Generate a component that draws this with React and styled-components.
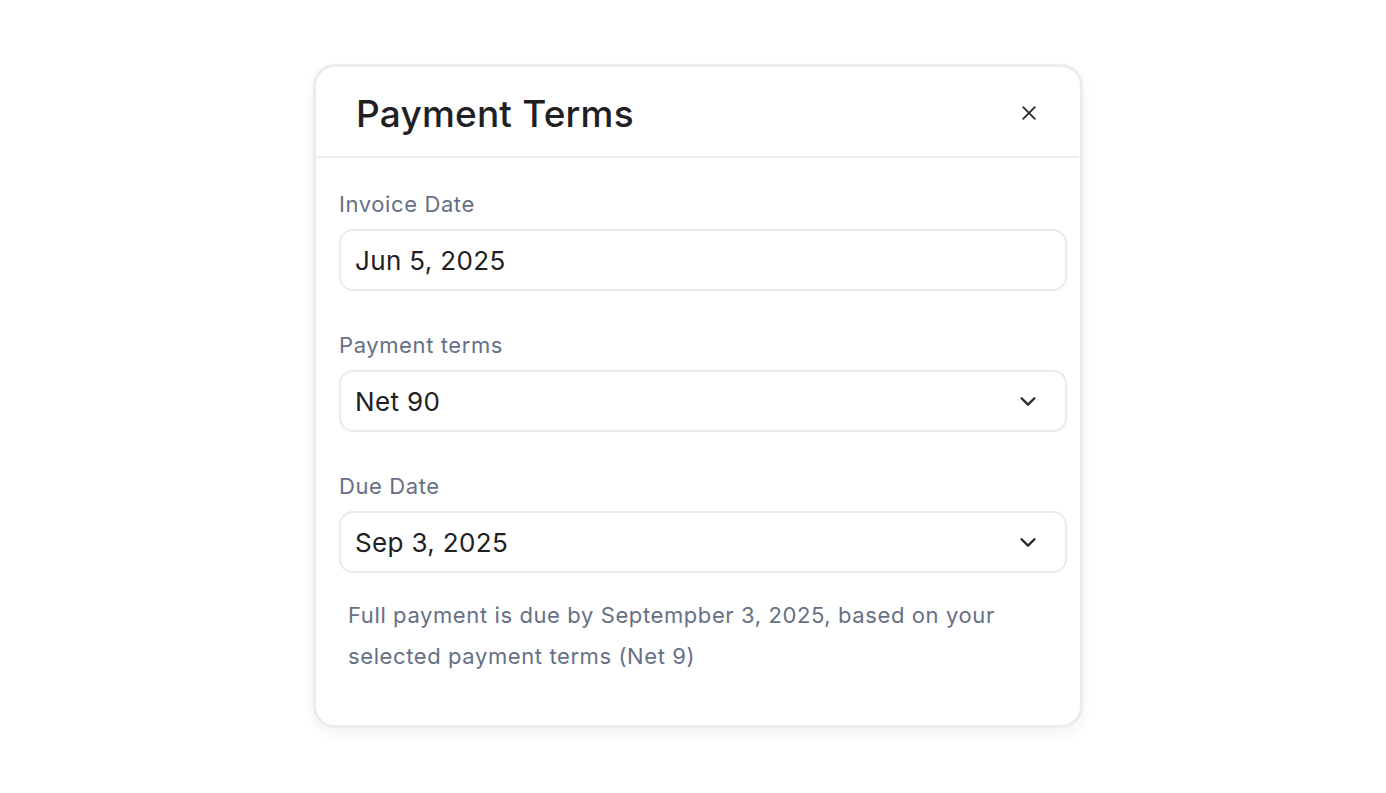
import React from "react";
import styled, { createGlobalStyle } from "styled-components";

const GlobalStyle = createGlobalStyle`
  html, body {
    margin: 0;
    padding: 0;
    background: #ffffff;
    font-family: Inter, "Noto Sans", sans-serif;
  }
`;

const Page = styled.div`
  width: 1386px;
  height: 793px;
  display: flex;
  justify-content: center;
  align-items: flex-start;
  padding-top: 64px;
  padding-left: 10px;
  box-sizing: border-box;
`;

const Card = styled.div`
  width: 770px;
  height: 664px;
  box-sizing: border-box;
  border: 3px solid #ececec;
  border-radius: 22px;
  background: #fff;
  box-shadow: 0 6px 14px rgba(0, 0, 0, 0.05);
  display: flex;
  flex-direction: column;
`;

const Header = styled.div`
  height: 91px;
  display: flex;
  align-items: center;
  justify-content: space-between;
  padding: 3px 38px 0 40px;
  box-sizing: border-box;
  border-bottom: 2px solid #ececec;
  margin-right: 1px;
`;

const Title = styled.h2`
  margin: 0;
  font-size: 37px;
  font-weight: 500;
  color: #1f2023;
  letter-spacing: 0.2px;
`;

const CloseButton = styled.button`
  border: none;
  background: none;
  padding: 0;
  width: 24px;
  height: 24px;
  display: flex;
  align-items: center;
  justify-content: center;
  color: #2a2b2e;
  cursor: pointer;
`;

const Body = styled.div`
  padding: 33px 13px 0 23px;
  display: flex;
  flex-direction: column;
  gap: 41px;
`;

const Field = styled.div`
  display: flex;
  flex-direction: column;
  gap: 12px;
`;

const Label = styled.label`
  font-size: 22px;
  line-height: 26px;
  letter-spacing: 0.6px;
  color: #667085;
`;

const Input = styled.div`
  height: 62px;
  box-sizing: border-box;
  border: 2px solid #ebebeb;
  border-radius: 14px;
  display: flex;
  align-items: center;
  justify-content: space-between;
  padding: 0 26px 0 14px;
  font-size: 26px;
  letter-spacing: 0.35px;
  color: #1f2023;
`;

const Help = styled.p`
  margin: -19px 0 0 9px;
  font-size: 22px;
  line-height: 41px;
  letter-spacing: 0.6px;
  color: #667085;
  max-width: 680px;
`;

const Chevron = () => (
  <svg width="22" height="22" viewBox="0 0 24 24" fill="none" stroke="#2a2b2e" strokeWidth="2.6" strokeLinecap="round" strokeLinejoin="round">
    <path d="M5 9l7 7 7-7" />
  </svg>
);

const fields = [
  { label: "Invoice Date", value: "Jun 5, 2025", select: false },
  { label: "Payment terms", value: "Net 90", select: true },
  { label: "Due Date", value: "Sep 3, 2025", select: true },
];

const App = () => {
  return (
    <>
      <GlobalStyle />
      <Page>
        <Card>
          <Header>
            <Title>Payment Terms</Title>
            <CloseButton aria-label="Close">
              <svg width="20" height="20" viewBox="0 0 24 24" fill="none" stroke="currentColor" strokeWidth="2.2" strokeLinecap="round">
                <path d="M5 5l14 14M19 5L5 19" />
              </svg>
            </CloseButton>
          </Header>
          <Body>
            {fields.map((f) => (
              <Field key={f.label}>
                <Label>{f.label}</Label>
                <Input>
                  <span>{f.value}</span>
                  {f.select && <Chevron />}
                </Input>
              </Field>
            ))}
            <Help>
              Full payment is due by Septempber 3, 2025, based on your selected payment terms (Net 9)
            </Help>
          </Body>
        </Card>
      </Page>
    </>
  );
};

export default App;
